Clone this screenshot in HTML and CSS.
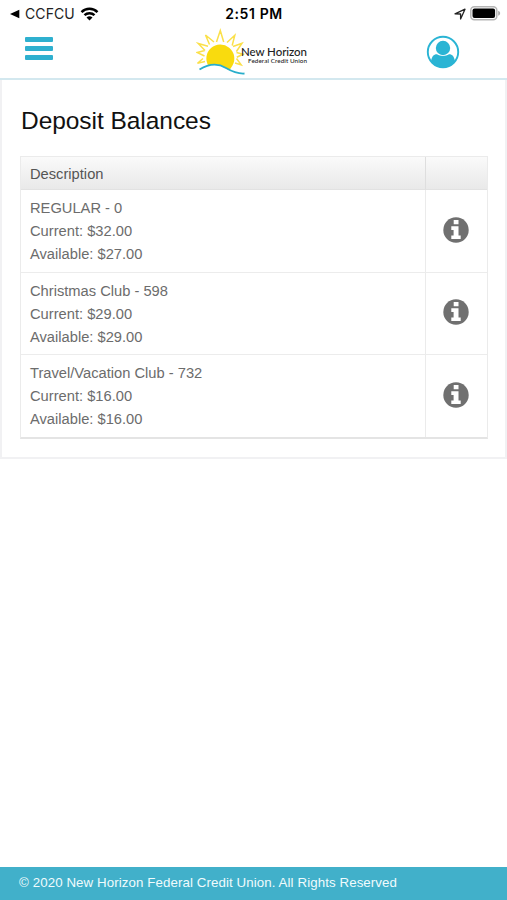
FILE: index.html
```
<!DOCTYPE html>
<html lang="en">
<head>
<meta charset="UTF-8" />
<meta name="viewport" content="width=device-width, initial-scale=1.0"/>
<title>New Horizon Federal Credit Union</title>
<link rel="stylesheet" href="styles.css">
</head>
<body>

<!-- Info icon shared by the table rows -->
<svg width="0" height="0" class="defs">
    <symbol id="info" viewBox="0 0 26 26">
        <circle cx="13" cy="13" r="12.7" fill="#707070"/>
        <path d="M10.7 3h4.8v4.2h-4.800zM8.300 9.300h7.200v9.200h2.200v3.600H8.300v-3.600h2.300v-5.500H8.300z" fill="#fff"/>
    </symbol>
</svg>

<div class="status-bar">
    <div class="status-left">
        <svg class="back" width="10" height="10" viewBox="0 0 10 10"><path d="M0 5L9.3.7v8.6z"/></svg>
        <span class="carrier">CCFCU</span>
        <svg class="wifi" width="19" height="14" viewBox="0 0 18 14">
            <path d="M1 5.1a11.5 11.5 0 0 1 16 0M4 8.2a7.3 7.3 0 0 1 10 0" fill="none" stroke="#000" stroke-width="2.5"/>
            <path d="M9 13.5L6 10.6a4.4 4.4 0 0 1 6 0z"/>
        </svg>
    </div>
    <div class="time">2:51 PM</div>
    <div class="status-right">
        <svg width="12" height="12" viewBox="0 0 12 12"><path d="M1 5.8L11 1.2 6.6 11V6z" fill="none" stroke="#222" stroke-width="1.3" stroke-linejoin="round"/></svg>
        <svg width="31" height="15" viewBox="0 0 31 15">
            <rect x=".8" y=".8" width="26" height="13" rx="3.5" fill="#fff" stroke="#b5b5b5" stroke-width="1.5"/>
            <rect x="2.5" y="2.6" width="22.6" height="9.5" rx="2"/>
            <path d="M28.2 4.8c2.6 1 2.6 4 0 5z" fill="#aaa"/>
        </svg>
    </div>
</div>

<header class="navbar">
    <button class="menu" aria-label="Menu"><span></span><span></span><span></span></button>
    <svg class="logo" width="114" height="48" viewBox="0 0 114 48">
        <path d="M20.500 14L24.300 2.500l3.400 11.500M13.500 16.500L9.500 7l8.500 7M31 14.500l7.800-7.300-2.600 10.300M9 22.500L2.200 15.500l9.800 2.800M37 18.500l9-3.300-5.600 8.300M8.500 28l-7.500-3.500 7.800-2M40.500 24.500l6.500 1.700-6.200 3M9 33.500l-7.500 1.700 5.500-4.700M40.500 30.500l4.700 6.300-6.200-1.800" fill="none" stroke="#fbe04a" stroke-width="1.5"/>
        <path d="M12.500 38A14 14 0 1 1 36.500 37.500q-2 4-4 4.500C25 37 20 34.500 12.500 38z" fill="#f9db0e"/>
        <path d="M3.500 41.500C10 37.500 20 34 30 40c6 3.500 11 6 18.500 5.500" fill="none" stroke="#28aecb" stroke-width="1.8"/>
        <text class="logo-name" x="45" y="27.500" textLength="66">New Horizon</text>
        <text class="logo-sub" x="52" y="34.500" textLength="59">Federal Credit Union</text>
    </svg>
    <svg class="user" width="34" height="34" viewBox="0 0 34 34">
        <circle cx="17" cy="17" r="15.2" fill="#fff" stroke="#2ab4d4" stroke-width="1.9"/>
        <circle cx="17" cy="13" r="7.2" fill="#2ab4d4"/>
        <path d="M5 26.500c.6-4.800 2.500-7.300 6-7.300 3.500 2.300 8.500 2.300 12 0 3.500 0 5.400 2.500 6 7.300a15.200 15.200 0 0 1-24 0z" fill="#2ab4d4"/>
    </svg>
</header>

<main class="panel">
    <h1>Deposit Balances</h1>
    <table class="balances">
        <thead>
            <tr><th>Description</th><th></th></tr>
        </thead>
        <tbody>
            <tr>
                <td>REGULAR - 0<br>Current: $32.00<br>Available: $27.00</td>
                <td class="info-cell"><svg class="info"><use href="#info"/></svg></td>
            </tr>
            <tr>
                <td>Christmas Club - 598<br>Current: $29.00<br>Available: $29.00</td>
                <td class="info-cell"><svg class="info"><use href="#info"/></svg></td>
            </tr>
            <tr>
                <td>Travel/Vacation Club - 732<br>Current: $16.00<br>Available: $16.00</td>
                <td class="info-cell"><svg class="info"><use href="#info"/></svg></td>
            </tr>
        </tbody>
    </table>
</main>

<footer>© 2020 New Horizon Federal Credit Union. All Rights Reserved</footer>

</body>
</html>
```
FILE: styles.css
```
* {
    box-sizing: border-box;
}

body {
    margin: 0;
    min-height: 100vh;
    display: flex;
    flex-direction: column;
    background: #fff;
    color: #6c6c6c;
    font-family: "Liberation Sans", Arial, sans-serif;
}

svg {
    display: block;
}

.defs {
    position: absolute;
}

/* Status bar */
.status-bar {
    display: grid;
    grid-template-columns: 1fr auto 1fr;
    align-items: center;
    height: 27px;
    padding: 0 6px 0 10px;
    color: #000;
    font-family: Inter, sans-serif;
    font-size: 14px;
}

.status-left,
.status-right {
    display: flex;
    align-items: center;
}

.carrier {
    margin: 0 5px 0 5px;
    color: #222;
    letter-spacing: 0.1px;
}

.time {
    margin-right: 3px;
    font-weight: 600;
    letter-spacing: 0.6px;
}

.status-right {
    justify-content: flex-end;
    gap: 4px;
}

/* Navbar */
.navbar {
    display: flex;
    justify-content: space-between;
    height: 53px;
    padding: 0 47px 0 25px;
    border-bottom: 2px solid #d3e8ef;
}

.menu {
    display: flex;
    flex-direction: column;
    gap: 4px;
    width: 28px;
    margin-top: 10px;
    padding: 0;
    border: none;
    background: none;
}

.menu span {
    width: 28px;
    height: 5px;
    border-radius: 1px;
    background: #2fb0cf;
}

.logo {
    margin: 1px 0 0 26px;
}

.logo-name {
    font-family: Lato, sans-serif;
    font-size: 11.5px;
    font-weight: 500;
    fill: #222;
}

.logo-sub {
    font-family: Lato, sans-serif;
    font-size: 6.3px;
    font-weight: 500;
    fill: #222;
}

.user {
    margin-top: 8px;
}

/* Balances */
.panel {
    height: 379px;
    padding: 27px 17px 0 18px;
    border: 2px solid #f1f1f3;
    border-top: none;
}

h1 {
    margin: 0 0 21px;
    padding-left: 1px;
    color: #111;
    font-size: 24.5px;
    font-weight: normal;
    line-height: 28px;
    letter-spacing: -0.05px;
}

.balances {
    width: 100%;
    table-layout: fixed;
    border-collapse: separate;
    border-spacing: 0;
    border: 1px solid #ebebeb;
    border-bottom: 2px solid #e4e4e4;
    font-size: 14.7px;
}

th {
    height: 33px;
    padding: 2px 9px 0;
    color: #555;
    font-weight: normal;
    text-align: left;
    background: linear-gradient(#fafafa, #e9e9e9);
    border-bottom: 1px solid #e2e2e2;
}

th:last-child {
    width: 62px;
    border-left: 1px solid #dedede;
}

td {
    height: 82.3px;
    padding: 7px 9px 5px;
    line-height: 23.2px;
    border-bottom: 1px solid #ececec;
}

tbody tr:last-child td {
    height: 82px;
    padding-top: 6px;
    border-bottom: none;
}

.info-cell {
    padding: 0 17px 2px;
    border-left: 1px solid #ebebeb;
}

.info {
    width: 26px;
    height: 26px;
}

tbody tr:last-child .info-cell {
    padding: 0 17px 3px;
}

footer {
    height: 33px;
    margin-top: auto;
    padding-left: 19px;
    background: #41b0ca;
    color: #f0fbfd;
    font-size: 13.3px;
    line-height: 31px;
    letter-spacing: 0.09px;
}
```
